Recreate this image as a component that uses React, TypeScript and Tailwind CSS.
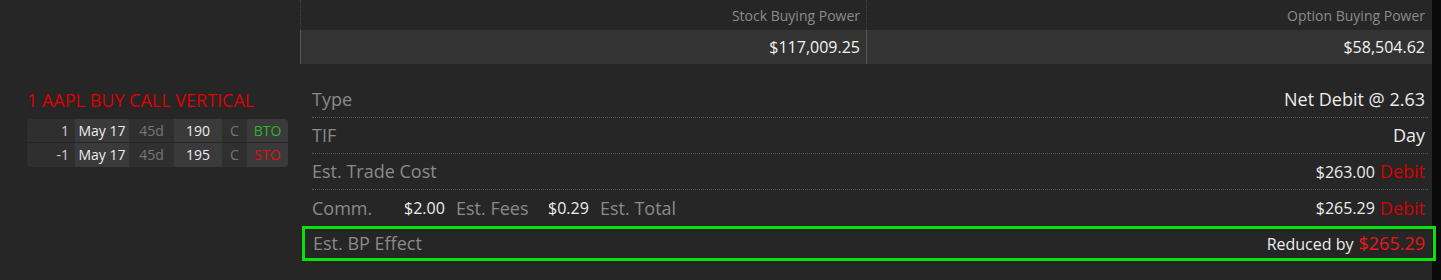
import React from "react";

const font = { fontFamily: '"Open Sans", "Noto Sans", Arial, sans-serif' };

type Leg = { qty: string; exp: string; dte: string; strike: string; type: string; side: string };

const legs: Leg[] = [
  { qty: "1", exp: "May 17", dte: "45d", strike: "190", type: "C", side: "BTO" },
  { qty: "-1", exp: "May 17", dte: "45d", strike: "195", type: "C", side: "STO" },
];

function LegRow({ leg, first }: { leg: Leg; first: boolean }) {
  const sep = first ? "border-b border-[#262626]" : "";
  return (
    <div className={`flex h-[24px] text-[14px] leading-[24px] ${sep}`}>
      <div className="w-[48px] bg-[#2f2f2f] pr-[6px] text-right text-[#d0d0d0]">{leg.qty}</div>
      <div className="w-[54px] bg-[#3a3a3a] text-center text-[#ececec]">{leg.exp}</div>
      <div className="w-[45px] bg-[#2f2f2f] text-center text-[#777]">{leg.dte}</div>
      <div className="w-[48px] bg-[#3a3a3a] text-center text-[#ececec]">{leg.strike}</div>
      <div className="w-[25px] bg-[#2f2f2f] text-center text-[#777]">{leg.type}</div>
      <div
        className={`w-[41px] bg-[#3a3a3a] text-center ${
          leg.side === "BTO" ? "text-[#2fb52f]" : "text-[#e01010]"
        }`}
      >
        {leg.side}
      </div>
    </div>
  );
}

function DetailRow({ label, children, last }: { label: React.ReactNode; children: React.ReactNode; last?: boolean }) {
  return (
    <div
      className={`ml-[12px] mr-[4px] flex h-[36px] items-center justify-between pr-[3px] ${
        last ? "" : "border-b border-dotted border-[#555]"
      }`}
    >
      <div className="flex items-center text-[18px] text-[#8a8a8a]">{label}</div>
      <div className="flex items-center">{children}</div>
    </div>
  );
}

export default function App() {
  return (
    <div className="flex h-[280px] w-[1441px] bg-[#262626]" style={font}>
      <div className="flex flex-1">
        <div className="w-[300px] pl-[27px] pt-[88px]">
          <div className="text-[18px] leading-[24px] text-[#dd0000]">1 AAPL BUY CALL VERTICAL</div>
          <div className="mt-[7px] w-[261px] overflow-hidden rounded-[4px]">
            {legs.map((l, i) => (
              <LegRow key={i} leg={l} first={i === 0} />
            ))}
          </div>
        </div>

        <div className="flex-1">
          <div className="grid grid-cols-[566px_1fr]">
            <div className="flex h-[30px] items-center justify-end border-l border-dotted border-[#444] pr-[6px] text-[14px] text-[#8c8c8c]">
              Stock Buying Power
            </div>
            <div className="flex h-[30px] items-center justify-end border-l border-dotted border-[#444] pr-[7px] text-[14px] text-[#8c8c8c]">
              Option Buying Power
            </div>
            <div className="flex h-[34px] items-center justify-end border-l border-[#555] bg-[#333] pr-[6px] text-[16px] text-[#f2f2f2]">
              $117,009.25
            </div>
            <div className="flex h-[34px] items-center justify-end border-l border-[#555] bg-[#333] pr-[7px] text-[16px] text-[#f2f2f2]">
              $58,504.62
            </div>
          </div>

          <div className="mt-[18px]">
            <DetailRow label="Type">
              <span className="text-[18px] text-[#ececec]">Net Debit @ 2.63</span>
            </DetailRow>
            <DetailRow label="TIF">
              <span className="text-[18px] text-[#ececec]">Day</span>
            </DetailRow>
            <DetailRow label="Est. Trade Cost">
              <span className="text-[16px] text-[#ececec]">$263.00</span>
              <span className="ml-[5px] text-[18px] text-[#d40000]">Debit</span>
            </DetailRow>
            <DetailRow
              last
              label={
                <>
                  <span className="w-[92px]">Comm.</span>
                  <span className="w-[52px] text-[16px] text-[#ececec]">$2.00</span>
                  <span className="w-[92px]">Est. Fees</span>
                  <span className="w-[52px] text-[16px] text-[#ececec]">$0.29</span>
                  <span>Est. Total</span>
                </>
              }
            >
              <span className="text-[16px] text-[#ececec]">$265.29</span>
              <span className="ml-[5px] text-[18px] text-[#d40000]">Debit</span>
            </DetailRow>
            <div className="relative z-10 ml-[2px] mr-[-4px] flex h-[35px] items-center justify-between border-[3px] border-[#0ae00a] px-[8px]">
              <span className="text-[18px] text-[#8a8a8a]">Est. BP Effect</span>
              <span className="flex items-center">
                <span className="text-[16px] text-[#ececec]">Reduced by</span>
                <span className="ml-[5px] text-[18px] text-[#e81818]">$265.29</span>
              </span>
            </div>
          </div>
        </div>
      </div>
      <div className="w-[9px] bg-[#0a0a0a]" />
    </div>
  );
}
